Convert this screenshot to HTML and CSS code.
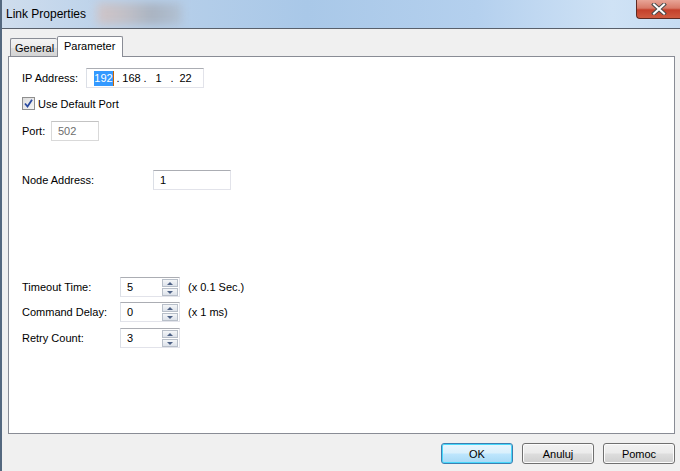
FILE: index.html
```html
<!DOCTYPE html>
<html lang="en">
<head>
  <meta charset="UTF-8">
  <title>Link Properties</title>
  <link rel="stylesheet" href="styles.css">
</head>
<body>
  <div class="window">
    <div class="titlebar">
      <div class="blur"></div>
      <span class="title">Link Properties</span>
      <button class="close" aria-label="Close">
        <svg width="16" height="12" viewBox="0 0 16 12">
          <path d="M3 1.5 L13 10.5 M13 1.5 L3 10.5" stroke="#4a4a4a" stroke-width="4" stroke-linecap="square"/>
          <path d="M3 1.5 L13 10.5 M13 1.5 L3 10.5" stroke="#ffffff" stroke-width="2" stroke-linecap="square"/>
        </svg>
      </button>
    </div>

    <div class="client">
      <div class="tabs">
        <div class="tab">General</div>
        <div class="tab active">Parameter</div>
      </div>

      <div class="panel">
        <div class="row ip-row">
          <label class="lbl w-ip">IP Address:</label>
          <div class="field ip">
            <span class="octet sel">192</span><span class="dot">.</span>
            <span class="octet">168</span><span class="dot">.</span>
            <span class="octet">1</span><span class="dot">.</span>
            <span class="octet">22</span>
          </div>
        </div>

        <div class="row check-row">
          <span class="checkbox">
            <svg width="9" height="9" viewBox="0 0 9 9"><path d="M1 4.5 L3.5 7.5 L8 0.8" fill="none" stroke="#2a4aa0" stroke-width="1.8"/></svg>
          </span>
          <span class="check-text">Use Default Port</span>
        </div>

        <div class="row port-row">
          <label class="lbl w-port">Port:</label>
          <div class="field port disabled">502</div>
        </div>

        <div class="row node-row">
          <label class="lbl w-node">Node Address:</label>
          <div class="field node">1</div>
        </div>

        <div class="row timeout-row">
          <label class="lbl w-spin">Timeout Time:</label>
          <div class="field spin">
            <span class="val">5</span>
            <span class="spinner"><span class="up"></span><span class="down"></span></span>
          </div>
          <span class="unit">(x 0.1 Sec.)</span>
        </div>

        <div class="row delay-row">
          <label class="lbl w-spin">Command Delay:</label>
          <div class="field spin">
            <span class="val">0</span>
            <span class="spinner"><span class="up"></span><span class="down"></span></span>
          </div>
          <span class="unit">(x 1 ms)</span>
        </div>

        <div class="row retry-row">
          <label class="lbl w-spin">Retry Count:</label>
          <div class="field spin">
            <span class="val">3</span>
            <span class="spinner"><span class="up"></span><span class="down"></span></span>
          </div>
        </div>
      </div>

      <div class="buttons">
        <button class="btn default">OK</button>
        <button class="btn">Anuluj</button>
        <button class="btn">Pomoc</button>
      </div>
    </div>
  </div>
</body>
</html>
```

FILE: styles.css
```css
body {
  margin: 0;
  width: 680px;
  height: 471px;
  overflow: hidden;
  font-family: 'Liberation Sans', Arial, sans-serif;
  font-size: 11px;
  color: #000;
  background: #f0f0f0;
}
.window {
  height: 471px;
  border-left: 2px solid #54687f;
  box-sizing: border-box;
  display: flex;
  flex-direction: column;
}
.titlebar {
  position: relative;
  height: 28px;
  flex: none;
  display: flex;
  align-items: center;
  border-bottom: 1px solid #59606b;
  background: linear-gradient(90deg, #cfdded 0%, #bcd2ea 15%, #a9c8e8 45%, #b4d0ee 70%, #cfe2f5 90%, #c6dcf2 100%);
  overflow: hidden;
}
.blur {
  position: absolute;
  left: 95px;
  top: 3px;
  width: 85px;
  height: 22px;
  background: linear-gradient(90deg, #d9c0ba 0%, #c3b8b8 35%, #a3a7b0 65%, #b0bccb 100%);
  filter: blur(5px);
  opacity: 0.7;
}
.title {
  position: relative;
  margin-left: 4px;
  margin-top: -1px;
  font-size: 12px;
  color: #000;
}
.close {
  position: absolute;
  right: 0;
  top: 0;
  width: 44px;
  height: 19px;
  padding: 0;
  border: 1px solid #5e2a22;
  border-top: none;
  border-right: none;
  border-radius: 0 0 0 4px;
  background: linear-gradient(180deg, #e8a597 0%, #d87a68 45%, #c4402b 55%, #cf5b40 100%);
  display: flex;
  align-items: center;
  justify-content: center;
}
.client {
  flex: 1;
  padding: 7px 5px 0 6px;
  display: flex;
  flex-direction: column;
}
.tabs {
  display: flex;
  align-items: flex-end;
  height: 20px;
  padding-left: 2px;
  position: relative;
  z-index: 1;
}
.tab {
  width: 47px;
  height: 18px;
  padding-left: 4px;
  box-sizing: border-box;
  border: 1px solid #898c95;
  border-bottom: none;
  border-right: none;
  background: linear-gradient(180deg, #f3f3f3 0%, #ebebeb 50%, #dedede 51%, #d4d4d4 100%);
  line-height: 19px;
  border-radius: 2px 2px 0 0;
}
.tab.active {
  width: 66px;
  height: 21px;
  margin-bottom: -1px;
  padding-left: 6px;
  border-right: 1px solid #898c95;
  background: #fff;
  line-height: 18px;
}
.panel {
  height: 378px;
  box-sizing: border-box;
  border: 1px solid #898c95;
  background: #fff;
  padding: 11px 0 0 13px;
}
.row {
  display: flex;
  align-items: center;
  height: 20px;
}
.lbl {
  flex: none;
}
.w-ip { width: 64px; }
.w-port { width: 29px; }
.w-node { width: 131px; }
.w-spin { width: 98px; }
.field {
  box-sizing: border-box;
  height: 20px;
  border: 1px solid #e2e3ea;
  border-top-color: #abadb3;
  border-left-color: #dbdfe6;
  background: #fff;
  display: flex;
  align-items: center;
  padding-left: 6px;
}
.ip {
  width: 118px;
  padding-left: 7px;
}
.octet {
  width: 19px;
  text-align: center;
  line-height: 15px;
}
.octet.sel {
  background: #3399ff;
  color: #fff;
  border-right: 1px solid #c86400;
}
.dot {
  width: 8px;
  text-align: center;
}
.check-row {
  margin-top: 8px;
  height: 15px;
}
.checkbox {
  width: 13px;
  height: 13px;
  box-sizing: border-box;
  border: 1px solid #8f8f8f;
  background: linear-gradient(135deg, #dcdcdc 0%, #f6f6f6 100%);
  display: flex;
  align-items: center;
  justify-content: center;
  margin-right: 3px;
}
.port-row { margin-top: 10px; }
.port {
  width: 48px;
  color: #6d6d6d;
  border-color: #d9d9d9;
  border-top-color: #c3c3c3;
}
.node-row { margin-top: 29px; }
.node { width: 78px; }
.timeout-row { margin-top: 87px; }
.delay-row { margin-top: 5px; }
.retry-row { margin-top: 6px; }
.spin {
  width: 60px;
  padding-right: 1px;
  justify-content: space-between;
}
.spinner {
  width: 16px;
  height: 17px;
  display: flex;
  flex-direction: column;
  gap: 1px;
}
.spinner span {
  flex: 1;
  box-sizing: border-box;
  border: 1px solid #b8bfc9;
  background: linear-gradient(180deg, #f4f6f8 0%, #dde2ea 100%);
  position: relative;
}
.spinner span::after {
  content: '';
  position: absolute;
  left: 4px;
  border-left: 3px solid transparent;
  border-right: 3px solid transparent;
}
.spinner .up::after {
  top: 2px;
  border-bottom: 3px solid #4d6185;
}
.spinner .down::after {
  top: 2px;
  border-top: 3px solid #4d6185;
}
.unit {
  margin-left: 8px;
}
.buttons {
  display: flex;
  justify-content: flex-end;
  gap: 9px;
  padding-top: 9px;
}
.btn {
  width: 72px;
  height: 21px;
  font-family: 'Liberation Sans', Arial, sans-serif;
  font-size: 11px;
  color: #000;
  border: 1px solid #707070;
  border-radius: 3px;
  background: linear-gradient(180deg, #f2f2f2 0%, #ebebeb 48%, #dddddd 52%, #cfcfcf 100%);
  box-shadow: inset 0 0 0 1px #fcfcfc;
  padding: 0;
}
.btn.default {
  border-color: #3c7fb1;
  background: linear-gradient(180deg, #eaf6fd 0%, #d9f0fc 48%, #bee6fd 52%, #a7d9f5 100%);
  box-shadow: inset 0 0 0 1px #48d8fb;
}
```
